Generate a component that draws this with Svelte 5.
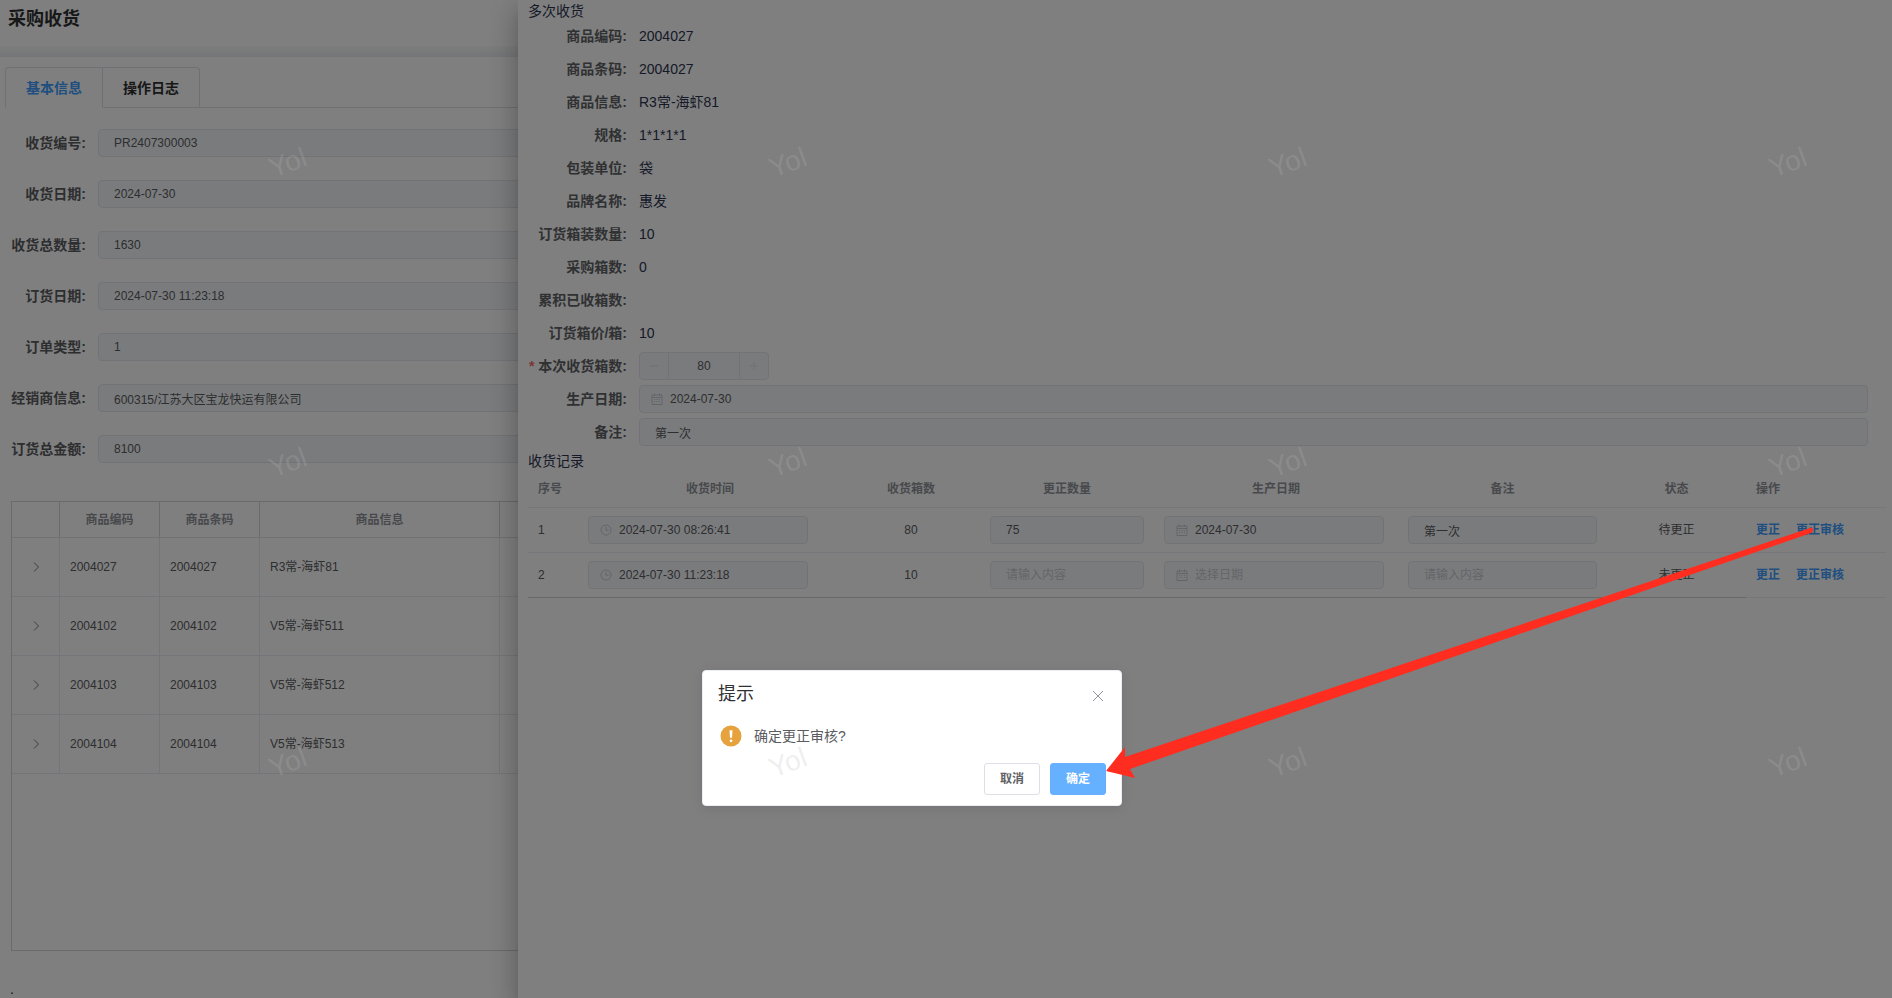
<script lang="ts">
    type Field = { id: string; label: string; value: string }

    const baseFields: Field[] = [
        { id: 'receiptNo', label: '收货编号:', value: 'PR2407300003' },
        { id: 'receiptDate', label: '收货日期:', value: '2024-07-30' },
        { id: 'receiptTotal', label: '收货总数量:', value: '1630' },
        { id: 'orderDate', label: '订货日期:', value: '2024-07-30 11:23:18' },
        { id: 'orderType', label: '订单类型:', value: '1' },
        { id: 'dealer', label: '经销商信息:', value: '600315/江苏大区宝龙快运有限公司' },
        { id: 'orderAmount', label: '订货总金额:', value: '8100' },
    ]

    const goods = [
        { code: '2004027', barcode: '2004027', name: 'R3常-海虾81' },
        { code: '2004102', barcode: '2004102', name: 'V5常-海虾511' },
        { code: '2004103', barcode: '2004103', name: 'V5常-海虾512' },
        { code: '2004104', barcode: '2004104', name: 'V5常-海虾513' },
    ]

    const details = [
        ['商品编码:', '2004027'],
        ['商品条码:', '2004027'],
        ['商品信息:', 'R3常-海虾81'],
        ['规格:', '1*1*1*1'],
        ['包装单位:', '袋'],
        ['品牌名称:', '惠发'],
        ['订货箱装数量:', '10'],
        ['采购箱数:', '0'],
        ['累积已收箱数:', ''],
        ['订货箱价/箱:', '10'],
    ]

    const records = [
        { time: '2024-07-30 08:26:41', boxes: 80, fixed: '75', date: '2024-07-30', remark: '第一次', status: '待更正' },
        { time: '2024-07-30 11:23:18', boxes: 10, fixed: '', date: '', remark: '', status: '未更正' },
    ]

    const marks = Array.from({ length: 12 })

    let activeTab = 'base'
    let messageVisible = true

    function closeMessage() {
        messageVisible = false
    }
</script>

{#snippet calendarIcon()}
    <svg class="prefix-icon" viewBox="0 0 12 12" aria-hidden="true">
        <path d="M1 2h10v9.5H1zM1 4.5h10M3.5 .5v2.5M8.5 .5v2.5" />
        <path d="M3 6.500h6M3 8.500h6" stroke-dasharray="1.200 1.200" />
    </svg>
{/snippet}

{#snippet clockIcon()}
    <svg class="prefix-icon" viewBox="0 0 12 12" aria-hidden="true">
        <circle cx="6" cy="6" r="5" />
        <path d="M6 3v3.200h2.800" />
    </svg>
{/snippet}

<div class="app">
    <main class="page">
        <header class="page-header">
            <h1>采购收货</h1>
        </header>

        <div class="tabs" role="tablist">
            <button class="tab" class:active={activeTab === 'base'} role="tab" aria-selected={activeTab === 'base'} on:click={() => (activeTab = 'base')}>基本信息</button>
            <button class="tab" class:active={activeTab === 'log'} role="tab" aria-selected={activeTab === 'log'} on:click={() => (activeTab = 'log')}>操作日志</button>
            <div class="tabs-rest"></div>
        </div>

        <form class="base-form">
            {#each baseFields as field}
                <div class="base-row">
                    <label for={field.id}>{field.label}</label>
                    <input id={field.id} class="input" type="text" value={field.value} disabled />
                </div>
            {/each}
        </form>

        <div class="goods-wrap">
            <table class="goods">
                <colgroup>
                    <col class="g-expand" />
                    <col class="g-code" />
                    <col class="g-code" />
                    <col class="g-name" />
                    <col />
                </colgroup>
                <thead>
                    <tr>
                        <th></th>
                        <th>商品编码</th>
                        <th>商品条码</th>
                        <th>商品信息</th>
                        <th></th>
                    </tr>
                </thead>
                <tbody>
                    {#each goods as item}
                        <tr>
                            <td class="expand">
                                <button class="expand-btn" aria-label="展开">
                                    <svg viewBox="0 0 12 12" aria-hidden="true"><path d="M4 1.500l4.500 4.500L4 10.500" /></svg>
                                </button>
                            </td>
                            <td>{item.code}</td>
                            <td>{item.barcode}</td>
                            <td>{item.name}</td>
                            <td></td>
                        </tr>
                    {/each}
                </tbody>
            </table>
        </div>

        <footer class="page-footer">.</footer>
    </main>

    <aside class="drawer">
        <h2>多次收货</h2>
        <dl class="details">
            {#each details as [label, value]}
                <div class="detail-row">
                    <dt>{label}</dt>
                    <dd>{value}</dd>
                </div>
            {/each}
        </dl>
        <form class="details">
            <div class="detail-row">
                <label for="boxCount"><span class="required">*</span>本次收货箱数:</label>
                <div class="number">
                    <button type="button" disabled aria-label="减少"><svg viewBox="0 0 10 10" aria-hidden="true"><path d="M1 5h8" /></svg></button>
                    <input id="boxCount" type="text" value="80" disabled />
                    <button type="button" disabled aria-label="增加"><svg viewBox="0 0 10 10" aria-hidden="true"><path d="M1 5h8M5 1v8" /></svg></button>
                </div>
            </div>
            <div class="detail-row">
                <label for="prodDate">生产日期:</label>
                <div class="picker wide">
                    {@render calendarIcon()}
                    <input id="prodDate" class="input" type="text" value="2024-07-30" disabled />
                </div>
            </div>
            <div class="detail-row">
                <label for="remark">备注:</label>
                <input id="remark" class="input" type="text" value="第一次" disabled />
            </div>
        </form>

        <h2>收货记录</h2>
        <table class="records">
            <colgroup>
                <col class="r-index" />
                <col class="r-time" />
                <col class="r-boxes" />
                <col class="r-fixed" />
                <col class="r-date" />
                <col class="r-remark" />
                <col class="r-status" />
                <col class="r-action" />
            </colgroup>
            <thead>
                <tr>
                    <th class="left">序号</th>
                    <th>收货时间</th>
                    <th>收货箱数</th>
                    <th>更正数量</th>
                    <th>生产日期</th>
                    <th>备注</th>
                    <th>状态</th>
                    <th class="left">操作</th>
                </tr>
            </thead>
            <tbody>
                {#each records as record, i}
                    <tr>
                        <td class="left">{i + 1}</td>
                        <td>
                            <div class="picker">
                                {@render clockIcon()}
                                <input class="input" type="text" aria-label="收货时间" value={record.time} disabled />
                            </div>
                        </td>
                        <td>{record.boxes}</td>
                        <td><input class="input" type="text" aria-label="更正数量" placeholder="请输入内容" value={record.fixed} disabled /></td>
                        <td>
                            <div class="picker">
                                {@render calendarIcon()}
                                <input class="input" type="text" aria-label="生产日期" placeholder="选择日期" value={record.date} disabled />
                            </div>
                        </td>
                        <td><input class="input" type="text" aria-label="备注" placeholder="请输入内容" value={record.remark} disabled /></td>
                        <td>{record.status}</td>
                        <td class="left">
                            <div class="actions">
                                <button class="link">更正</button>
                                <button class="link">更正审核</button>
                            </div>
                        </td>
                    </tr>
                {/each}
            </tbody>
        </table>
    </aside>

    <div class="mask"></div>

    {#if messageVisible}
        <div class="message" role="dialog" aria-modal="true" aria-labelledby="messageTitle">
            <div class="message-header">
                <h3 id="messageTitle">提示</h3>
                <button class="close" aria-label="关闭" on:click={closeMessage}>
                    <svg viewBox="0 0 12 12" aria-hidden="true"><path d="M1 1l10 10M11 1L1 11" /></svg>
                </button>
            </div>
            <div class="message-body">
                <svg viewBox="0 0 22 22" aria-hidden="true">
                    <circle cx="11" cy="11" r="10.500" fill="#e6a23c" />
                    <path d="M9.500 5.200h3l-.5 7.600h-2z" fill="#fff" />
                    <circle cx="11" cy="15.800" r="1.400" fill="#fff" />
                </svg>
                <p>确定更正审核?</p>
            </div>
            <div class="message-btns">
                <button class="btn" on:click={closeMessage}>取消</button>
                <button class="btn primary" on:click={closeMessage}>确定</button>
            </div>
        </div>
    {/if}

    <div class="watermark" aria-hidden="true">
        {#each marks as _}
            <span>Yol</span>
        {/each}
    </div>

    <svg class="arrow" viewBox="0 0 708 252" aria-hidden="true">
        <path d="M0 244L19 220V230L704 1Q707 0 707 3Q707 5 705 6L24 242L29 251Z" />
    </svg>
</div>

<style>
    :global(body) {
        background-color: #fff;
    }

    .app {
        position: relative;
        height: 100vh;
        overflow: hidden;
        font-family: "Liberation Sans", "Noto Sans CJK SC", sans-serif;
        font-size: 12px;
        line-height: 20px;
        color: #5a5c60;
    }

    .app * {
        box-sizing: border-box;
    }

    h1,
    h2,
    h3,
    p,
    dl,
    dd {
        margin: 0;
    }

    button,
    input {
        font-family: inherit;
        line-height: inherit;
    }

    button {
        padding: 0;
        border: none;
        background: none;
        cursor: pointer;
    }

    .page {
        display: flex;
        flex-direction: column;
        height: 100%;
    }

    .page > * {
        flex-shrink: 0;
    }

    .page-header {
        height: 57px;
        padding: 5px 8px;
        background: linear-gradient(#f8f9f8, #ebedf1) bottom / 100% 11px no-repeat;
    }

    h1 {
        font-size: 18px;
        line-height: 28px;
        color: #303133;
    }

    .tabs {
        display: flex;
        height: 41px;
        margin: 10px 0 0 5px;
    }

    .tab {
        padding: 0 20px;
        border: 1px solid #dfe1e6;
        border-left: none;
        font-size: 14px;
        font-weight: bold;
        color: #303133;
    }

    .tab:first-child {
        border-left: 1px solid #dfe1e6;
        border-top-left-radius: 4px;
    }

    .tab:nth-child(2) {
        border-top-right-radius: 4px;
    }

    .tab.active {
        border-bottom-color: transparent;
        color: #409eff;
    }

    .tabs-rest {
        flex: 1;
        border-bottom: 1px solid #dfe1e6;
    }

    .base-form {
        display: flex;
        flex-direction: column;
        gap: 23px;
        margin-top: 21px;
    }

    .base-row {
        display: flex;
        align-items: center;
    }

    .base-row label {
        width: 98px;
        padding-right: 12px;
        text-align: right;
        font-size: 14px;
        font-weight: bold;
        white-space: nowrap;
    }

    .input {
        display: block;
        flex: 1;
        width: 100%;
        height: 28px;
        padding: 0 15px;
        border: 1px solid #e4e7ed;
        border-radius: 4px;
        background-color: #f5f7fa;
        font-size: 12px;
        color: #5a5c60;
    }

    .input::placeholder {
        color: #c8cbd2;
    }

    .goods-wrap {
        height: 450px;
        margin: 38px 0 0 11px;
        border: 1px solid #d6d6d6;
    }

    table {
        border-collapse: separate;
        border-spacing: 0;
        table-layout: fixed;
    }

    .goods {
        width: 100%;
    }

    .g-expand {
        width: 48px;
    }

    .g-code {
        width: 100px;
    }

    .g-name {
        width: 240px;
    }

    .goods th {
        height: 36px;
        padding: 0 10px;
        border-right: 1px solid #d6d6d6;
        border-bottom: 1px solid #e0e2e6;
        color: #909399;
    }

    .goods td {
        height: 59px;
        padding: 0 10px;
        border-right: 1px solid #e9ebf0;
        border-bottom: 1px solid #e9ebf0;
    }

    .goods .expand {
        padding-top: 4px;
        text-align: center;
    }

    .expand-btn svg {
        display: block;
        width: 12px;
        height: 12px;
        fill: none;
        stroke: #7c7e82;
    }

    .page-footer {
        margin: 28px 0 0 10px;
        font-size: 14px;
        color: #303133;
    }

    .drawer {
        position: absolute;
        top: 0;
        right: 0;
        bottom: 0;
        left: 518px;
        padding: 1px 6px 0 10px;
        background-color: #fff;
        box-shadow: 0 8px 10px -5px rgba(0, 0, 0, 0.2), 0 16px 24px 2px rgba(0, 0, 0, 0.14), 0 6px 30px 5px rgba(0, 0, 0, 0.12);
        color: #2c3450;
    }

    h2 {
        font-size: 14px;
        font-weight: normal;
        line-height: 21px;
    }

    .details {
        padding-right: 18px;
    }

    .detail-row {
        display: flex;
        align-items: center;
        height: 28px;
        margin-bottom: 5px;
        font-size: 14px;
    }

    .detail-row dt,
    .detail-row label {
        width: 111px;
        padding-right: 12px;
        text-align: right;
        font-weight: bold;
        white-space: nowrap;
        color: #606266;
    }

    .required {
        margin-right: 4px;
        color: #f56c6c;
    }

    .number {
        display: flex;
        width: 130px;
        height: 28px;
        border: 1px solid #e4e7ed;
        border-radius: 4px;
        background-color: #f5f7fa;
    }

    .number button {
        width: 28px;
    }

    .number svg {
        display: block;
        width: 10px;
        height: 10px;
        margin: 0 auto;
        fill: none;
        stroke: #e0e2e8;
    }

    .number input {
        flex: 1;
        min-width: 0;
        padding: 0;
        border: 1px solid #e4e7ed;
        border-width: 0 1px;
        background: none;
        text-align: center;
        font-size: 12px;
        color: #5a5c60;
    }

    .picker {
        position: relative;
        width: 220px;
    }

    .picker.wide {
        flex: 1;
    }

    .picker .input {
        padding-left: 30px;
    }

    .prefix-icon {
        position: absolute;
        top: 8px;
        left: 12px;
        width: 12px;
        height: 12px;
        fill: none;
        stroke: #c8cbd2;
    }

    .records {
        width: 100%;
        color: #5a5c60;
    }

    .r-index {
        width: 50px;
    }

    .r-time {
        width: 264px;
    }

    .r-boxes {
        width: 138px;
    }

    .r-fixed {
        width: 174px;
    }

    .r-date {
        width: 244px;
    }

    .r-remark {
        width: 209px;
    }

    .r-action {
        width: 140px;
    }

    .records th {
        height: 36px;
        padding: 0 10px 2px;
        border-bottom: 1px solid #ebeef5;
        color: #909399;
    }

    .records td {
        height: 45px;
        padding: 0 10px;
        border-bottom: 1px solid #ebeef5;
        text-align: center;
    }

    .records tr:last-child td:not(:last-child) {
        border-bottom-color: #d2d3d6;
    }

    .records .left {
        text-align: left;
    }

    .actions {
        display: flex;
        gap: 16px;
    }

    .link {
        font-size: 12px;
        font-weight: bold;
        color: #409eff;
    }

    .mask {
        position: absolute;
        inset: 0;
        background-color: rgba(0, 0, 0, 0.5);
    }

    .message {
        position: absolute;
        top: 670px;
        left: 702px;
        width: 420px;
        padding-bottom: 10px;
        border: 1px solid #ebeef5;
        border-radius: 4px;
        background-color: #fff;
        box-shadow: 0 2px 12px 0 rgba(0, 0, 0, 0.1);
    }

    .message-header {
        display: flex;
        align-items: center;
        justify-content: space-between;
        padding: 12px 16px 10px 15px;
    }

    h3 {
        font-size: 18px;
        font-weight: normal;
        line-height: 22px;
        color: #303133;
    }

    .close {
        padding: 3px 1px 0;
    }

    .close svg {
        display: block;
        width: 12px;
        height: 12px;
        fill: none;
        stroke: #909399;
    }

    .message-body {
        display: flex;
        align-items: center;
        gap: 12px;
        padding: 10px 17px;
    }

    .message-body svg {
        width: 22px;
        height: 22px;
    }

    .message-body p {
        font-size: 14px;
    }

    .message-btns {
        display: flex;
        justify-content: flex-end;
        gap: 10px;
        padding: 6px 15px 0;
    }

    .btn {
        width: 56px;
        height: 32px;
        border: 1px solid #dcdfe6;
        border-radius: 3px;
        background-color: #fff;
        font-size: 12px;
        font-weight: bold;
        color: #606266;
    }

    .btn.primary {
        border-color: #66b1ff;
        background-color: #66b1ff;
        color: #fff;
    }

    .watermark {
        position: absolute;
        inset: 0;
        display: grid;
        grid-template-columns: repeat(4, 500px);
        grid-auto-rows: 300px;
        place-items: center;
        padding: 13px 0 0 38px;
        overflow: hidden;
        pointer-events: none;
        font-size: 28px;
        color: rgba(184, 184, 184, 0.24);
    }

    .watermark span {
        transform: rotate(-20deg);
    }

    .arrow {
        position: absolute;
        top: 527px;
        left: 1106px;
        width: 708px;
        height: 252px;
        fill: #ff2d1f;
        pointer-events: none;
    }
</style>
